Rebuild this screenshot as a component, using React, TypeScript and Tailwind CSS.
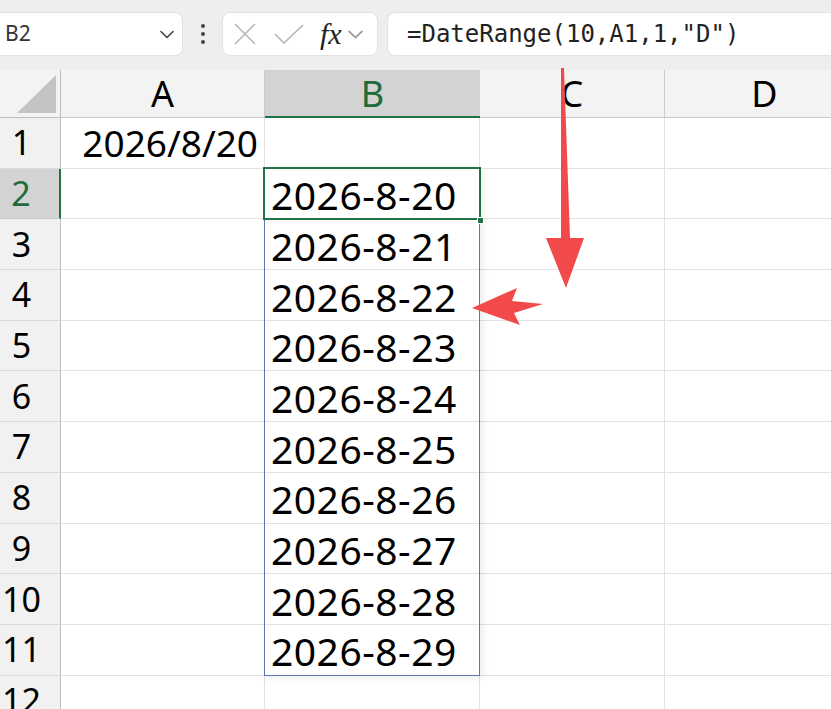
import type { FC, ReactNode } from "react";

const COLS = [
  { key: "A", w: "w-[204px]" },
  { key: "B", w: "w-[215px]" },
  { key: "C", w: "w-[185px]" },
  { key: "D", w: "w-[200px]" },
];

const ROWS = Array.from({ length: 12 }, (_, i) => i + 1);

// B2:B11 spill of the DateRange formula
const spill = (row: number) =>
  row >= 2 && row <= 11 ? `2026-8-${20 + row - 2}` : "";

const Chevron: FC<{ className?: string }> = ({ className }) => (
  <svg viewBox="0 0 14 8" className={className} fill="none">
    <polyline
      points="1,1 7,7 13,1"
      stroke="currentColor"
      strokeWidth="1.6"
      strokeLinecap="round"
      strokeLinejoin="round"
    />
  </svg>
);

const Toolbar: FC = () => (
  <div className="flex h-[70px] items-center gap-0 bg-[#eeeeee] pb-[2px]">
    <div className="flex h-[44px] w-[183px] items-center justify-between rounded-r-lg border border-l-0 border-[#e2e2e2] bg-white pl-[5px] pr-[8px]">
      <span className="text-[21px] text-[#333]">B2</span>
      <Chevron className="h-[9px] w-[14px] text-[#444]" />
    </div>
    <div className="flex w-[39px] flex-col items-center gap-[4px]">
      <span className="h-[4px] w-[4px] rounded-full bg-[#444]" />
      <span className="h-[4px] w-[4px] rounded-full bg-[#444]" />
      <span className="h-[4px] w-[4px] rounded-full bg-[#444]" />
    </div>
    <div className="flex h-[44px] w-[156px] items-center rounded-lg border border-[#e2e2e2] bg-white pl-[10px]">
      <svg viewBox="0 0 24 24" className="h-[24px] w-[24px] text-[#b5b5b5]" fill="none">
        <path d="M2 2 L22 22 M22 2 L2 22" stroke="currentColor" strokeWidth="1.6" />
      </svg>
      <svg viewBox="0 0 30 20" className="ml-[17px] h-[20px] w-[30px] text-[#b5b5b5]" fill="none">
        <polyline points="1,10 10,19 29,1" stroke="currentColor" strokeWidth="1.6" />
      </svg>
      <span
        className="ml-[16px] text-[30px] italic leading-none text-[#222]"
        style={{ fontFamily: '"Liberation Serif", serif' }}
      >
        fx
      </span>
      <Chevron className="ml-[6px] h-[9px] w-[15px] text-[#9a9a9a]" />
    </div>
    <div className="ml-[9px] flex h-[44px] flex-1 items-center rounded-l-lg border border-r-0 border-[#e2e2e2] bg-white pl-[19px]">
      <span
        className="text-[24px] text-[#222]"
        style={{ fontFamily: '"DejaVu Sans Mono", "Liberation Mono", monospace' }}
      >
        =DateRange(10,A1,1,"D")
      </span>
    </div>
  </div>
);

const HeaderCell: FC<{ w: string; active?: boolean; children?: ReactNode }> = ({
  w,
  active,
  children,
}) => (
  <div
    className={`flex h-[48px] shrink-0 items-center justify-center border-b text-[36px] ${w} ${
      active
        ? "border-b-[2px] border-[#217346] bg-[#d3d3d3] pt-[2px] text-[#1e6b3c]"
        : "border-r border-[#c9c9c9] bg-[#f3f3f3] text-black"
    }`}
  >
    {children}
  </div>
);

const GridRow: FC<{ row: number }> = ({ row }) => {
  const active = row === 2;
  return (
    <div className="flex h-[50.7px]">
      <div
        className={`flex w-[61px] shrink-0 items-center justify-center pr-[17px] text-[34px] ${
          active
            ? "border-r-[2px] border-b border-r-[#217346] border-b-[#c9c9c9] bg-[#d3d3d3] text-[#1e6b3c]"
            : "border-r border-b border-r-[#bdbdbd] border-b-[#d9d9d9] bg-[#f1f1f1] text-black"
        }`}
      >
        {row}
      </div>
      <div className="flex w-[204px] shrink-0 items-center justify-end border-r border-b border-[#e1e1e1] pr-[6px] text-[37px]">
        {row === 1 ? "2026/8/20" : ""}
      </div>
      <div className="flex w-[215px] shrink-0 items-center border-r border-b border-[#e1e1e1] pl-[6px] pt-[4px] text-[39px] tracking-[0.5px]">
        {spill(row)}
      </div>
      <div className="w-[185px] shrink-0 border-r border-b border-[#e1e1e1]" />
      <div className="w-[200px] shrink-0 border-b border-[#e1e1e1]" />
    </div>
  );
};

const Arrows: FC = () => (
  <svg
    className="pointer-events-none absolute left-0 top-0 h-[709px] w-[831px]"
    viewBox="0 0 831 709"
  >
    <polygon
      points="561,68 564,68 570,238 584,238 566,288 546,238 561,238"
      fill="#f24a4a"
    />
    <polygon
      points="472,308 517,288 512,301 543,304 514,313 520,325"
      fill="#f24a4a"
    />
  </svg>
);

export default function App() {
  return (
    <div
      className="relative h-[709px] w-[831px] overflow-hidden bg-white text-black"
      style={{ fontFamily: '"Noto Sans", "Noto Sans CJK SC", sans-serif' }}
    >
      <Toolbar />
      <div className="relative">
        <div className="flex">
          <div className="relative h-[48px] w-[61px] shrink-0 border-r border-b border-[#bdbdbd] bg-[#f3f3f3]">
            <div className="absolute bottom-[4px] right-[4px] h-[38px] w-[39px] bg-[#c4c4c4] [clip-path:polygon(100%_0,100%_100%,0_100%)]" />
          </div>
          {COLS.map((c) => (
            <HeaderCell key={c.key} w={c.w} active={c.key === "B"}>
              {c.key}
            </HeaderCell>
          ))}
        </div>
        {ROWS.map((r) => (
          <GridRow key={r} row={r} />
        ))}
        {/* spill range outline B2:B11 */}
        <div className="pointer-events-none absolute left-[264px] top-[98px] h-[508px] w-[216px] border border-[#5b78b5] shadow-[3px_2px_8px_rgba(0,0,0,0.08)]" />
        {/* active cell B2 */}
        <div className="pointer-events-none absolute left-[263px] top-[97px] h-[53px] w-[218px] border-2 border-[#217346]" />
        <div className="pointer-events-none absolute left-[477px] top-[147px] h-[7px] w-[7px] border border-white bg-[#217346]" />
      </div>
      <Arrows />
    </div>
  );
}
